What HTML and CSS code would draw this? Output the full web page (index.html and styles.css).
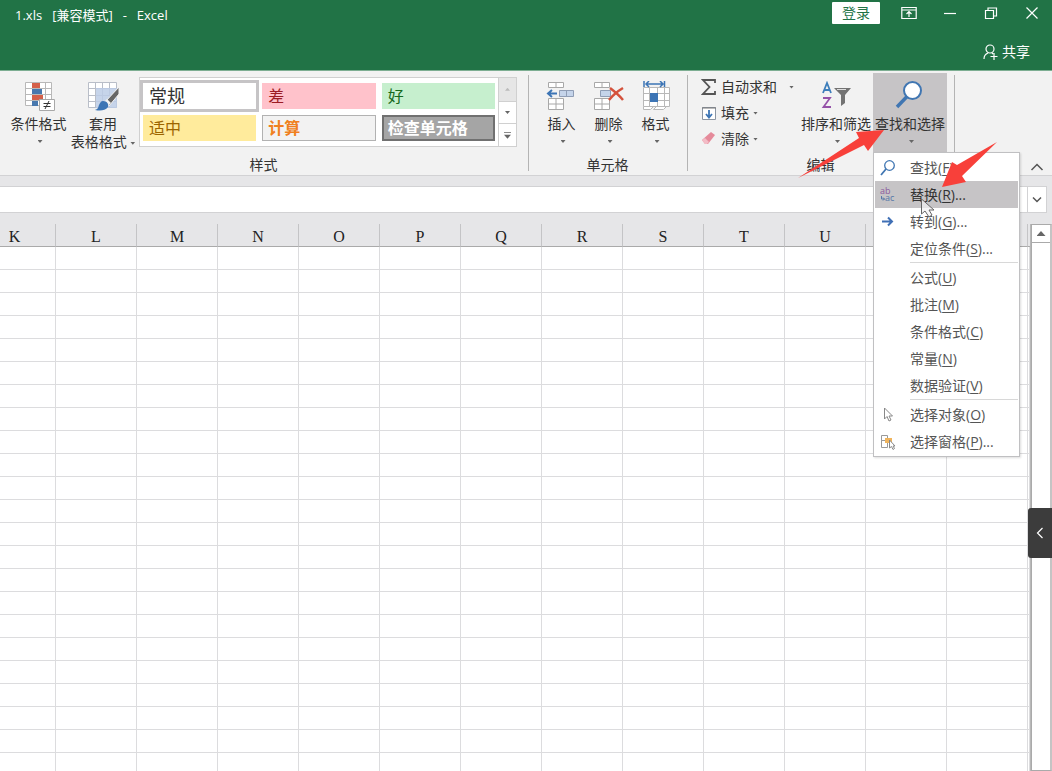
FILE: index.html
```html
<!DOCTYPE html>
<html lang="zh-CN">
<head>
<meta charset="utf-8">
<title>1.xls [兼容模式] - Excel</title>
<link rel="stylesheet" href="styles.css">
</head>
<body>
<div class="app">
  <header class="titlebar">
    <div class="title-row">
      <h1 class="title"><span>1.xls</span><span>[兼容模式]</span><span>-</span><span>Excel</span></h1>
      <button class="login" type="button">登录</button>
      <div class="window-controls">
        <button type="button" aria-label="功能区显示选项"><svg width="16" height="14" viewBox="0 0 16 14"><path d="M.8 1.5h14.4v11H.8zM1 4h14M8 11V6M5.500 8L8 5.500 10.500 8"/></svg></button>
        <button type="button" aria-label="最小化"><svg width="14" height="14" viewBox="0 0 14 14"><path d="M1 7.500h12"/></svg></button>
        <button type="button" aria-label="还原"><svg width="14" height="14" viewBox="0 0 14 14"><path d="M1.500 4.500h8v8h-8zM4 4.500V2h8.500v8H9.500"/></svg></button>
        <button type="button" aria-label="关闭"><svg width="14" height="14" viewBox="0 0 14 14"><path d="M1.500 1.500l11 11M12.500 1.500l-11 11"/></svg></button>
      </div>
    </div>
    <button class="share" type="button"><svg width="15" height="16" viewBox="0 0 15 16"><circle cx="7" cy="5" r="4"/><path d="M1 15c0-3 1.500-5 4-6M9 9l1 1M7.500 12.500h7M11 9v7"/></svg>共享</button>
  </header>

  <section class="ribbon" aria-label="开始">
    <div class="group styles-group">
      <div class="tools">
        <button class="big" type="button">
          <svg class="icon" width="32" height="32" viewBox="0 0 32 32"><path fill="#fff" stroke="#b8b8b8" d="M2.500 1.500h26v23h-26zM2.500 7.500h26M2.500 13.500h26M2.500 19.500h26M9.500 1.500v23M22.500 1.500v23"/><path fill="#d4604a" d="M9 2h8v5H9zM9 14h11v5H9z"/><path fill="#4878ae" d="M9 8h10v5H9zM9 20h6v5H9z"/><path fill="#fff" stroke="#a8a8a8" d="M16.500 18.500h15v11h-15z"/><path stroke="#333" d="M20.500 22.500h7M20.500 25.500h7M26 20l-4 8"/></svg>
          <span>条件格式</span><i class="caret"></i>
        </button>
        <button class="big wide" type="button">
          <svg class="icon" width="32" height="32" viewBox="0 0 32 32"><path fill="#fff" d="M1.500 1.500h28v25h-28z"/><path fill="none" stroke="#b9bec8" d="M1.500 1.500h28v25h-28zM1.500 7.500h28M1.500 14.500h28M1.500 20.500h28M8.500 1.500v25M15.500 1.500v25M22.500 1.500v25"/><path fill="#bccde6" fill-opacity=".85" d="M9 7h21v20H9z"/><path fill="#666" stroke="#f2f2f2" d="M32 6v7L22 25l-4-4z"/><path fill="#f2f2f2" d="M20 18l4 4-3 3-4-4z"/><path fill="#3d75b5" d="M16 20c4 0 6 3 5 6-3 4-8 4-13 3 3-1 3-2 4-5 1-2 2-4 4-4z"/></svg>
          <span>套用</span><span>表格格式 <i class="caret"></i></span>
        </button>
        <div class="gallery">
          <div class="swatches">
            <button class="swatch normal" type="button">常规</button>
            <button class="swatch bad" type="button">差</button>
            <button class="swatch good" type="button">好</button>
            <button class="swatch neutral" type="button">适中</button>
            <button class="swatch calc" type="button">计算</button>
            <button class="swatch check" type="button">检查单元格</button>
          </div>
          <div class="gallery-scroll">
            <button type="button" aria-label="向上" disabled><i class="caret up"></i></button>
            <button type="button" aria-label="向下"><i class="caret"></i></button>
            <button type="button" aria-label="其他"><i class="caret more"></i></button>
          </div>
        </div>
      </div>
      <h2>样式</h2>
    </div>

    <div class="group cells-group">
      <div class="tools">
        <button class="big" type="button">
          <svg class="icon" width="32" height="32" viewBox="0 0 32 32"><path fill="#fff" stroke="#a8a8a8" d="M2.500 1.500h15v5h-15zM10 1.500v5M2.500 17.500h15v11h-15zM2.500 23h15M10 17.500v11"/><path fill="#c5d4ea" stroke="#8f9db5" d="M13.500 9.500h14v6h-14zM20.500 9.500v6"/><path fill="none" stroke="#3d75b5" stroke-width="2" d="M11 12.500H2M6 9l-4 3.500L6 16"/></svg>
          <span>插入</span><i class="caret"></i>
        </button>
        <button class="big" type="button">
          <svg class="icon" width="32" height="32" viewBox="0 0 32 32"><path fill="#fff" stroke="#a8a8a8" d="M1.500 1.500h15v5h-15zM9 1.500v5M1.500 17.500h15v11h-15zM1.500 23h15M9 17.500v11"/><path fill="#c5d4ea" stroke="#8f9db5" d="M7.500 9.500h10v6h-10z"/><path fill="none" stroke="#d4523c" stroke-width="2.500" d="M17 7c4 3 9 7 13 12M30 7c-5 3-10 7-14 12"/></svg>
          <span>删除</span><i class="caret"></i>
        </button>
        <button class="big" type="button">
          <svg class="icon" width="32" height="32" viewBox="0 0 32 32"><path fill="#fff" stroke="#b8b8b8" d="M3.500 6.500h26v19h-26zM3.500 12.500h26M3.500 19.500h26M9.500 6.500v19M17.500 6.500v19M24.500 6.500v19M3.500 25.500v3h7l3-3M16.500 25.500l-3 3h10l3-3"/><path fill="#3d75b5" d="M10 12h8v9h-8z"/><path fill="none" stroke="#3d75b5" stroke-width="1.500" d="M4 0v6M24.500 0v6M6 3h17M9 0L6 3l3 3M20 0l3 3-3 3"/></svg>
          <span>格式</span><i class="caret"></i>
        </button>
      </div>
      <h2>单元格</h2>
    </div>

    <div class="group edit-group">
      <div class="tools">
        <div class="small-list">
          <button class="small" type="button"><svg width="16" height="16" viewBox="0 0 16 16"><path fill="none" stroke="#555" stroke-width="1.800" d="M14 4V1H2l6.500 7L2 15h12v-3"/></svg>自动求和<i class="caret far"></i></button>
          <button class="small" type="button"><svg width="16" height="16" viewBox="0 0 16 16"><path fill="#fff" stroke="#8c96a3" d="M1.500 2.500h13v12h-13z"/><path stroke="#777" d="M1 3h14"/><path fill="none" stroke="#3d75b5" stroke-width="1.800" d="M8 5v7M5 9l3 3.500L11 9"/></svg>填充<i class="caret"></i></button>
          <button class="small" type="button"><svg width="16" height="16" viewBox="0 0 16 16"><path fill="#e58a9a" d="M10 1l4 3-7 9H4L1 9z"/><path fill="#f3bcc6" d="M4 7l4 4-2 2H4L1 9z"/></svg>清除<i class="caret"></i></button>
        </div>
        <button class="big sort" type="button">
          <svg class="icon" width="32" height="32" viewBox="0 0 32 32"><path fill="none" stroke="#3d7ebb" stroke-width="1.800" d="M3 12L7 2 11 12M4.500 9h5"/><path fill="none" stroke="#9552a8" stroke-width="1.800" d="M3 17h7L3.500 26H11"/><path fill="#737373" d="M14 7h17l-6 7v8l-4 3V14z"/><path stroke="#ddd" d="M17 8.500h9"/></svg>
          <span>排序和筛选</span><i class="caret"></i>
        </button>
        <div class="find-wrap">
          <button class="big find" type="button" aria-haspopup="menu" aria-expanded="true">
            <svg class="icon" width="32" height="32" viewBox="0 0 32 32"><path stroke="#4076b2" stroke-width="3.500" d="M13.500 15L3 26"/><circle cx="18.500" cy="9.500" r="8.500" fill="#fff" stroke="#4076b2" stroke-width="2"/></svg>
            <span>查找和选择</span><i class="caret"></i>
          </button>
          <div class="menu" role="menu">
            <button role="menuitem" type="button"><svg width="16" height="16" viewBox="0 0 16 16"><circle cx="9.500" cy="5.500" r="4.800" fill="none" stroke="#4076b2" stroke-width="1.300"/><path stroke="#4076b2" stroke-width="1.800" d="M6 9l-5 6"/></svg><span>查找(<u>F</u>)...</span></button>
            <button role="menuitem" type="button" class="active"><svg class="abac" width="16" height="16" viewBox="0 0 16 16"><text x="0" y="7" fill="#8b5b9e">ab</text><text x="5" y="14" fill="#5578a8">ac</text><path fill="none" stroke="#5578a8" d="M1.500 9v3h3M3 10.500l1.500 1.500L3 13.500"/></svg><span>替换(<u>R</u>)...</span></button>
            <button role="menuitem" type="button"><svg width="16" height="16" viewBox="0 0 16 16"><path fill="none" stroke="#3f6fb5" stroke-width="2" d="M2 7.500h10M8 3.500l4 4-4 4"/></svg><span>转到(<u>G</u>)...</span></button>
            <button role="menuitem" type="button"><i class="no-icon"></i><span>定位条件(<u>S</u>)...</span></button>
            <hr>
            <button role="menuitem" type="button"><i class="no-icon"></i><span>公式(<u>U</u>)</span></button>
            <button role="menuitem" type="button"><i class="no-icon"></i><span>批注(<u>M</u>)</span></button>
            <button role="menuitem" type="button"><i class="no-icon"></i><span>条件格式(<u>C</u>)</span></button>
            <button role="menuitem" type="button"><i class="no-icon"></i><span>常量(<u>N</u>)</span></button>
            <button role="menuitem" type="button"><i class="no-icon"></i><span>数据验证(<u>V</u>)</span></button>
            <hr>
            <button role="menuitem" type="button"><svg width="16" height="16" viewBox="0 0 16 16"><path fill="#fff" stroke="#888" d="M4.500 1v11l2.500-2.500L9 14l2-1-2-4h3.500z"/></svg><span>选择对象(<u>O</u>)</span></button>
            <button role="menuitem" type="button"><svg width="16" height="16" viewBox="0 0 16 16"><path fill="#fff" stroke="#999" d="M1.500 1.500h6v5h-6zM1.500 6.500h6v7h-6z"/><path fill="#f0b45c" d="M5 4h7v5H5z"/><path fill="#fff" stroke="#888" d="M9.500 6v8l2-1.500 1.500 3 1.500-1-1.500-2.500h2z"/></svg><span>选择窗格(<u>P</u>)...</span></button>
          </div>
        </div>
      </div>
      <h2>编辑</h2>
    </div>
    <button class="collapse" type="button" aria-label="折叠功能区"><svg width="14" height="8" viewBox="0 0 14 8"><path d="M1.500 7L7 1.500 12.500 7"/></svg></button>
  </section>

  <div class="formula-bar">
    <input class="formula" type="text" aria-label="编辑栏">
    <button class="expand" type="button" aria-label="展开编辑栏"><svg width="12" height="8" viewBox="0 0 12 8"><path d="M2 1.500L6 5.500 10 1.500"/></svg></button>
  </div>

  <main class="sheet">
    <div class="grid-area">
      <table class="grid">
        <thead><tr><th class="first">K</th><th>L</th><th>M</th><th>N</th><th>O</th><th>P</th><th>Q</th><th>R</th><th>S</th><th>T</th><th>U</th><th></th><th></th><th class="last"></th></tr></thead>
        <tbody id="rows"></tbody>
      </table>
    </div>
    <div class="scrollbar"><button type="button" aria-label="向上滚动"><i class="caret up"></i></button></div>
  </main>

  <button class="drawer" type="button" aria-label="展开侧栏"><svg width="8" height="12" viewBox="0 0 8 12"><path d="M6.500 1L1.500 6l5 5"/></svg></button>
  <svg class="annotations" width="200" height="80" viewBox="0 0 200 80" aria-hidden="true">
    <path fill="#f8403a" d="M0 48L61 8l-3-6L86 0 70 21l-4-6zM199 12L159 35l-5-3-10 25 24-5-4-6z"/>
    <path fill="#f4f2f4" fill-opacity=".7" stroke="#666" d="M123.500 69v15l3.500-3 4 6 3-2-3-5h5z"/>
  </svg>
</div>
<script src="grid.js"></script>
</body>
</html>
```
FILE: styles.css
```css
* { box-sizing: border-box; }
body {
  margin: 0;
  font: 14px/18px "Open Sans", "Noto Sans CJK SC", sans-serif;
  color: #333;
}
button {
  margin: 0;
  padding: 0;
  border: 0;
  background: none;
  font: inherit;
  color: inherit;
}
svg { flex: none; display: block; }
.app {
  position: relative;
  display: flex;
  flex-direction: column;
  height: 100vh;
  overflow: hidden;
  background: #e6e6e8;
}

.titlebar {
  flex: none;
  height: 71px;
  background: #217346;
  border-bottom: 1px solid #7dae92;
  color: #fff;
}
.title-row { display: flex; height: 30px; }
.title {
  display: flex;
  flex: 1;
  gap: 10px;
  margin: 0;
  padding: 6px 0 0 15px;
  font-size: 13px;
  font-weight: 400;
}
.login {
  width: 48px;
  height: 22px;
  margin-top: 2px;
  background: #fff;
  border-radius: 1px;
  color: #217346;
}
.window-controls { display: flex; height: 26px; margin-left: 8px; }
.window-controls button {
  display: grid;
  place-items: center;
  width: 41px;
}
.titlebar svg { fill: none; stroke: #fff; stroke-width: 1.2; }
.share {
  display: flex;
  align-items: center;
  gap: 4px;
  margin: 13px 22px 0 auto;
}

.ribbon {
  flex: none;
  display: flex;
  height: 105px;
  padding-top: 2px;
  background: #f2f2f2;
  border-bottom: 1px solid #d2d2d4;
}
.group {
  position: relative;
  display: flex;
  flex-direction: column;
  justify-content: space-between;
  flex: none;
}
.group::after {
  content: "";
  position: absolute;
  right: 0;
  top: 2px;
  bottom: 4px;
  width: 1px;
  background: #b4b4b4;
}
.group h2 {
  margin: 0 2px 1px 0;
  font-size: 14px;
  font-weight: 400;
  text-align: center;
}
.tools { display: flex; height: 79px; }
.styles-group { width: 529px; }
.styles-group .tools { padding-left: 8px; }
.cells-group { width: 159px; }
.cells-group .tools { justify-content: center; }
.edit-group { width: 267px; }
.edit-group .tools { padding-left: 13px; }

.big {
  display: flex;
  flex-direction: column;
  align-items: center;
  width: 47px;
  padding-top: 8px;
  white-space: nowrap;
}
.big .icon { margin-bottom: 2px; }
.icon { fill: none; }
.styles-group .big { width: 61px; }
.styles-group .wide { width: 68px; }
.caret {
  display: inline-block;
  width: 5px;
  height: 3px;
  background: #666;
  clip-path: polygon(0 0, 100% 0, 50% 100%);
  vertical-align: middle;
}
.caret.up { clip-path: polygon(50% 0, 100% 100%, 0 100%); }
.big > .caret { margin: 7px 0 0 3px; }

.gallery {
  display: flex;
  width: 378px;
  height: 70px;
  margin: 4px 0 0 2px;
  background: #fff;
  border: 1px solid #d0d0d0;
}
.swatches {
  flex: 1;
  display: grid;
  grid-template-columns: repeat(3, 1fr);
  grid-auto-rows: 26px;
  gap: 6px;
  padding: 5px 3px 0;
}
.swatch {
  padding-left: 5px;
  border: 1px solid transparent;
  font-size: 16px;
  line-height: 24px;
  text-align: left;
}
.normal { box-shadow: 0 0 0 3px #c6c4c6; font-size: 18px; line-height: 22px; }
.bad { background: #ffc2cb; color: #9c1c24; }
.good { background: #c6efce; color: #16691c; }
.neutral { background: #ffeb9c; color: #9c6500; }
.calc { background: #f2f2f2; border-color: #b2b2b2; color: #f08020; font-weight: 700; }
.check { background: #a5a5a5; border: 2px solid #707070; color: #fff; font-weight: 700; padding-left: 4px; line-height: 22px; }
.gallery-scroll { display: grid; width: 18px; grid-template-rows: repeat(3, 1fr); }
.gallery-scroll button {
  display: grid;
  place-items: center;
  border-left: 1px solid #d0d0d0;
}
.gallery-scroll button + button { border-top: 1px solid #d0d0d0; }
.gallery-scroll button:disabled { background: #e6e6e6; }
.gallery-scroll button:disabled .caret { background: #bbb; }
.caret.more {
  height: 7px;
  width: 7px;
  clip-path: polygon(0 0, 100% 0, 100% 1px, 0 1px, 0 3px, 100% 3px, 50% 100%, 0 3px);
}

.small-list { width: 100px; padding-top: 1px; }
.small { display: flex; align-items: center; height: 26px; gap: 4px; white-space: nowrap; }
.small .far { margin-left: 8px; }
.sort { width: 70px; }
.find-wrap { position: relative; display: flex; margin-left: 2px; }
.find { width: 74px; background: #c6c4c6; }
.menu {
  position: absolute;
  z-index: 5;
  top: 100%;
  left: 0;
  width: 147px;
  padding: 1px;
  background: #fff;
  border: 1px solid #c0c0c2;
  box-shadow: 1px 1px 2px #0002;
  color: #555;
}
.menu button {
  display: flex;
  align-items: center;
  gap: 14px;
  width: 100%;
  height: 27px;
  padding-left: 5px;
  white-space: nowrap;
}
.menu .active { background: #c6c4c6; color: #333; }
.menu u { text-decoration-thickness: 1px; text-underline-offset: 2px; }
.menu hr { margin: 0 0 1px 35px; border: 0; border-top: 1px solid #d8d8d8; }
.no-icon { width: 16px; }
.abac { overflow: visible; font: 9px "Open Sans", sans-serif; }
.collapse { align-self: flex-end; margin: 0 8px 4px auto; }
.collapse svg, .expand svg { fill: none; stroke: #555; stroke-width: 1.5; }

.formula-bar {
  flex: none;
  display: flex;
  height: 27px;
  margin: 10px 5px 0 0;
  background: #fff;
  border: 1px solid #d2d2d4;
  border-left: 0;
}
.formula { flex: 1; border: 0; border-right: 1px solid #d2d2d4; background: none; }
.expand { display: grid; place-items: center; width: 18px; }

.sheet {
  flex: 1;
  min-height: 0;
  display: flex;
  padding-top: 11px;
}
.grid-area { flex: 1; min-width: 0; overflow: hidden; border-right: 1px solid #b8b8b8; }
.grid {
  width: 100%;
  table-layout: fixed;
  border-collapse: separate;
  border-spacing: 0;
}
.grid th {
  width: 81px;
  height: 23px;
  padding: 4px 0 0;
  border-right: 1px solid #c4c4c6;
  border-bottom: 1px solid #aaa;
  font: 16px/18px "Liberation Serif", serif;
  color: #222;
}
.grid .first { width: 56px; padding-right: 26px; }
.grid .last { width: auto; border-right: 0; }
.grid td {
  height: 23px;
  padding: 0;
  background: #fff;
  border-right: 1px solid #dcdcde;
  border-bottom: 1px solid #dcdcde;
}
.scrollbar {
  width: 21px;
  border: 1px solid #aaa;
  border-right: 2px solid #c4c4c4;
  background: #fff;
}
.scrollbar button {
  display: grid;
  place-items: center;
  width: 100%;
  height: 18px;
  border-bottom: 1px solid #aaa;
}
.scrollbar .caret { width: 9px; height: 5px; }

.drawer {
  position: absolute;
  right: 0;
  top: 508px;
  display: grid;
  place-items: center;
  width: 24px;
  height: 50px;
  background: #3c3c3c;
  border-radius: 3px 0 0 3px;
}
.drawer svg { fill: none; stroke: #fff; stroke-width: 1.2; }
.annotations {
  position: absolute;
  z-index: 6;
  left: 798px;
  top: 130px;
  overflow: visible;
  pointer-events: none;
}
```
FILE: grid.js
```js
const columns = 14;
const body = document.getElementById("rows");
for (let r = 0; r < 40; r++) {
  const row = body.insertRow();
  for (let c = 0; c < columns; c++) row.insertCell();
}
```
